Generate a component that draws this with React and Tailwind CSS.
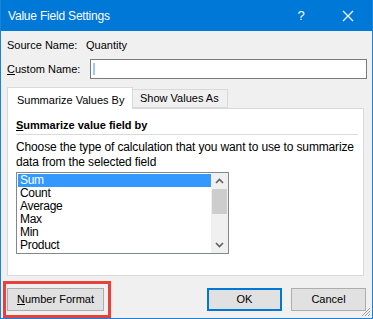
import React from "react";

const items = ["Sum", "Count", "Average", "Max", "Min", "Product"];

function Chevron({ up }) {
  return (
    <svg width="9" height="6" viewBox="0 0 9 6" className="block">
      <path
        d={up ? "M1 5 L4.5 1.5 L8 5" : "M1 1 L4.5 4.5 L8 1"}
        fill="none"
        stroke="#606060"
        strokeWidth="1.6"
      />
    </svg>
  );
}

export default function App() {
  return (
    <div
      className="relative w-[373px] h-[319px] bg-[#f0f0f0] border-x border-b border-[#1883d7] text-[11px] text-black flex flex-col overflow-hidden whitespace-nowrap"
      style={{ fontFamily: '"Liberation Sans", Arial, sans-serif' }}
    >
      {/* Title bar */}
      <div className="h-[31px] shrink-0 bg-[#0078d7] text-white flex items-center pl-[8px] -mx-px">
        <span className="flex-1 text-[12px] tracking-[-0.2px]">Value Field Settings</span>
        <span className="w-[20px] text-center text-[13px] mr-[31px]">?</span>
        <svg width="12" height="12" viewBox="0 0 12 12" className="mr-[19px]">
          <path d="M1 1 L11 11 M11 1 L1 11" stroke="white" strokeWidth="1.2" />
        </svg>
      </div>

      {/* Source name */}
      <div className="flex items-center h-[16px] mt-[6px] pl-[6px]">
        <span className="w-[79px]">Source Name:</span>
        <span>Quantity</span>
      </div>

      {/* Custom name */}
      <div className="flex items-center h-[20px] mt-[6px] pl-[6px]">
        <span className="w-[83px]">
          <span className="underline">C</span>ustom Name:
        </span>
        <div className="w-[277px] h-[20px] bg-white border border-[#7a7a7a] flex items-center pl-[2px]">
          <div className="w-[2px] h-[12px] bg-[#99c9ff]" />
        </div>
      </div>

      {/* Tabs */}
      <div className="flex items-end h-[21px] mt-[8px] ml-[6px] relative z-10">
        <div className="w-[126px] h-[22px] bg-white border border-b-0 border-[#d9d9d9] flex items-start pt-[4px] pl-[9px] -mb-px">
          Summarize Values By
        </div>
        <div className="w-[95px] h-[19px] bg-[#f0f0f0] border border-l-0 border-[#d9d9d9] flex items-center pl-[7px]">
          Show Values As
        </div>
      </div>

      {/* Panel */}
      <div className="ml-[6px] w-[357px] h-[168px] bg-white border border-[#d9d9d9] pl-[8px] pr-[5px] pt-[8px]">
        <div className="h-[16px] leading-[16px] font-bold text-[11px]">
          <span className="underline">S</span>ummarize value field by
        </div>
        <div className="h-px bg-[#dadada] mt-px w-[342px]" />
        <div className="mt-[5px] leading-[15px] w-[345px] text-[12px] tracking-[-0.14px]">
          Choose the type of calculation that you want to use to summarize
          <br />
          data from the selected field
        </div>
        <div className="mt-[2px] w-[213px] h-[82px] border border-[#828790] flex text-[12px] tracking-[-0.3px]">
          <div className="flex-1 pt-px pl-px">
            {items.map((it, i) => (
              <div
                key={it}
                className={
                  "h-[13px] leading-[13px] pl-[2px] " +
                  (i === 0 ? "bg-[#3399ff] text-white" : "")
                }
              >
                {it}
              </div>
            ))}
          </div>
          <div className="w-[17px] bg-[#f0f0f0] flex flex-col">
            <div className="h-[16px] flex items-center justify-center">
              <Chevron up />
            </div>
            <div className="h-[25px] mx-px bg-[#cdcdcd]" />
            <div className="flex-1" />
            <div className="h-[17px] flex items-center justify-center">
              <Chevron />
            </div>
          </div>
        </div>
      </div>

      {/* Buttons */}
      <div className="flex items-center mt-[12px] pl-[6px]">
        <button className="w-[97px] h-[23px] bg-[#e1e1e1] border border-[#adadad] flex items-center justify-center">
          <span>
            <span className="underline">N</span>umber Format
          </span>
        </button>
        <div className="w-[103px]" />
        <button className="w-[75px] h-[23px] bg-[#e1e1e1] border-2 border-[#0078d7] flex items-center justify-center">
          OK
        </button>
        <div className="w-[9px]" />
        <button className="w-[75px] h-[23px] bg-[#e1e1e1] border border-[#adadad] flex items-center justify-center">
          Cancel
        </button>
      </div>

      {/* Highlight annotation */}
      <div className="absolute left-[2px] top-[281px] w-[108px] h-[37px] border-[3px] border-[#e8413c] pointer-events-none" />

      {/* Resize grip */}
      <svg width="10" height="10" viewBox="0 0 10 10" className="absolute right-px bottom-px">
        <path d="M9 1 L1 9 M9 4 L4 9 M9 7 L7 9" stroke="#a0a0a0" strokeWidth="1" />
      </svg>
    </div>
  );
}
